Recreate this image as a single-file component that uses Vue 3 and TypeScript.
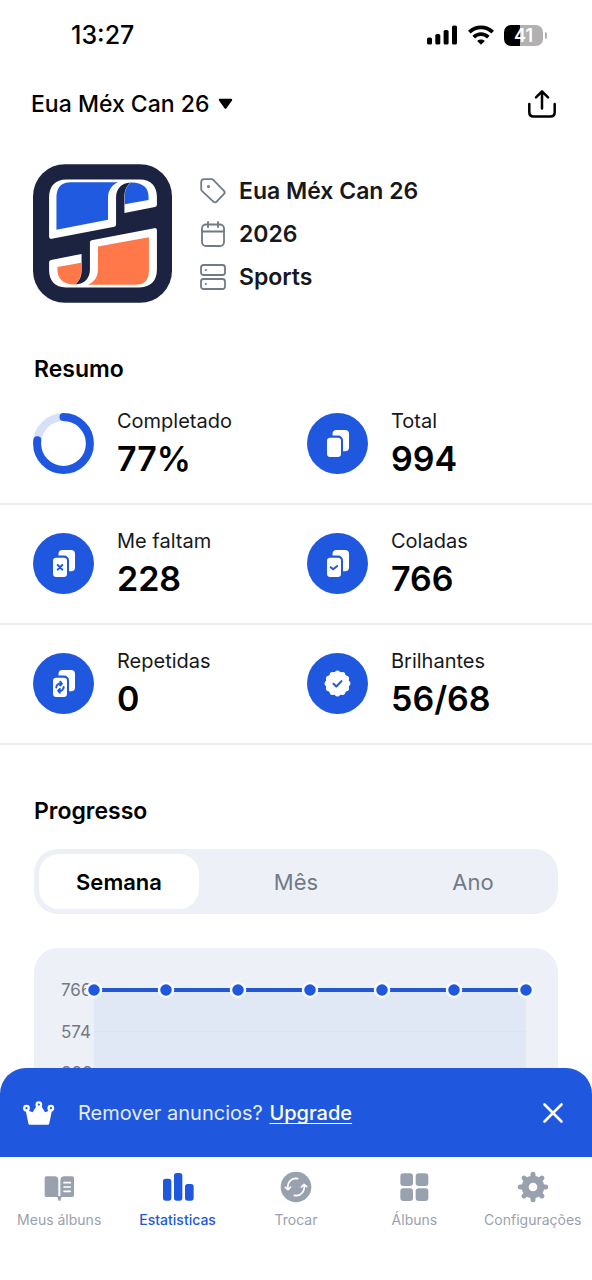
<script setup lang="ts">
import { computed, ref } from 'vue'

type StatIcon = 'ring' | 'cards' | 'missing' | 'pasted' | 'repeated' | 'badge'
interface Stat { label: string; value: string; icon: StatIcon }
interface Tab { id: string; label: string }

const album = 'Eua Méx Can 26'
const stats: Stat[] = [
  { label: 'Completado', value: '77%', icon: 'ring' },
  { label: 'Total', value: '994', icon: 'cards' },
  { label: 'Me faltam', value: '228', icon: 'missing' },
  { label: 'Coladas', value: '766', icon: 'pasted' },
  { label: 'Repetidas', value: '0', icon: 'repeated' },
  { label: 'Brilhantes', value: '56/68', icon: 'badge' },
]

const ranges = ['Semana', 'Mês', 'Ano']
const range = ref('Semana')

const tabs: Tab[] = [
  { id: 'book', label: 'Meus álbuns' },
  { id: 'bars', label: 'Estatisticas' },
  { id: 'swap', label: 'Trocar' },
  { id: 'grid', label: 'Álbuns' },
  { id: 'gear', label: 'Configurações' },
]
const activeTab = ref('bars')
const bannerOpen = ref(true)

// Chart geometry: seven daily samples, all at the top of the scale
const samples = [766, 766, 766, 766, 766, 766, 766]
const scale = [766, 574, 383, 191, 0]
const plot = { left: 60, right: 492, top: 42, bottom: 208 }
const points = computed(() =>
  samples.map((v, i) => ({
    x: plot.left + ((plot.right - plot.left) * i) / (samples.length - 1),
    y: plot.bottom - ((plot.bottom - plot.top) * v) / 766,
  })),
)
const line = computed(() => points.value.map((p) => `${p.x},${p.y}`).join(' '))
const area = computed(() => `${plot.left},${plot.bottom} ${line.value} ${plot.right},${plot.bottom}`)
const gridY = (v: number) => plot.bottom - ((plot.bottom - plot.top) * v) / 766

const around = (count: number, cx: number, cy: number, r: number) =>
  Array.from({ length: count }, (_, i) => {
    const a = (i * 2 * Math.PI) / count
    return { x: cx + r * Math.sin(a), y: cy - r * Math.cos(a) }
  })
const scallops = around(12, 30.5, 30.5, 10.2)
const teeth = around(8, 45, 45, 38)
</script>

<template>
  <div class="screen">
    <div class="status">
      <span class="clock">13:27</span>
      <div class="status-icons">
        <svg width="31" height="20" viewBox="0 0 31 20" aria-hidden="true">
          <rect x="0" y="12.500" width="5" height="7" rx="1.600" />
          <rect x="8.300" y="9" width="5" height="10.500" rx="1.600" />
          <rect x="16.600" y="5" width="5" height="14.500" rx="1.600" />
          <rect x="25" y="0.500" width="5" height="19" rx="1.600" />
        </svg>
        <svg width="26" height="20" viewBox="0 0 26 20" fill="none" stroke="#000" stroke-width="3.700" aria-hidden="true">
          <path d="M1.300 7.200C8 .8 18 .8 24.700 7.200" />
          <path d="M5.700 12.200c4.200-4 10.400-4 14.600 0" />
          <path d="M13 19.800l-3.800-3.900c2.200-1.900 5.400-1.900 7.600 0z" fill="#000" stroke="none" />
        </svg>
        <div class="battery"><span>41</span></div>
      </div>
    </div>

    <header class="topbar">
      <button class="picker" type="button">
        {{ album }}
        <svg width="15" height="12" viewBox="0 0 15 12" aria-hidden="true">
          <path d="M1.800 1.800h11.400L7.500 9.800z" stroke="#000" stroke-width="2" stroke-linejoin="round" />
        </svg>
      </button>
      <button class="share" type="button" aria-label="Compartilhar">
        <svg width="28" height="28" viewBox="0 0 28 28" fill="none" stroke="#000" stroke-width="2.500" stroke-linecap="round" stroke-linejoin="round" aria-hidden="true">
          <path d="M1.300 14v8.300q0 4.300 4.300 4.300h16.800q4.300 0 4.300-4.300V14M14 18.500V1.500M8 7.300l6-6 6 6" />
        </svg>
      </button>
    </header>

    <main class="content">
      <section class="album">
        <svg class="cover" viewBox="40 28 415 414" aria-hidden="true">
          <rect x="40" y="28" width="415" height="414" rx="96" fill="#1b2340" />
          <g>
            <path d="M88 128C88 94 106 74 140 74H360C392 74 410 94 410 126V149Q410 155 404 156L313 174V125C313 108 318 96 331 83C305 84 288 102 288 127V209Q288 214 283 215L96 251Q88 252 88 245Z" fill="#fff" />
            <path d="M110 224V124Q112 82 152 82H294C272 92 265 108 264 127V194Z" fill="#1f5ae0" />
            <path d="M331 83C318 97 314 108 314 125V148L385 135V126C385 98 366 82 331 83Z" fill="#1f5ae0" />
          </g>
          <g transform="rotate(180 249 235)">
            <path d="M88 128C88 94 106 74 140 74H360C392 74 410 94 410 126V149Q410 155 404 156L313 174V125C313 108 318 96 331 83C305 84 288 102 288 127V209Q288 214 283 215L96 251Q88 252 88 245Z" fill="#fff" />
            <path d="M112 224V124Q112 82 152 82H294C272 92 265 108 264 127V196Z" fill="#ff7849" />
            <path d="M331 83C318 97 314 108 314 125V148L385 135V126C385 98 366 82 331 83Z" fill="#ff7849" />
          </g>
        </svg>
        <ul class="facts">
          <li>
            <svg class="fact-icon" viewBox="0 0 26 26" aria-hidden="true">
              <path d="M1.200 4.200q0-3 3-3h7.100q1.300 0 2.200.9l10.300 10.500q1.800 1.800 0 3.600l-6.900 7.200q-1.900 1.900-3.800 0L2.100 13.200q-.9-.9-.9-2.200z" />
              <circle cx="8.500" cy="8.500" r="0.700" />
            </svg>
            {{ album }}
          </li>
          <li>
            <svg class="fact-icon" viewBox="0 0 26 26" aria-hidden="true">
              <rect x="2" y="3.500" width="22" height="21.500" rx="4" />
              <path d="M2 10.500h22M8 .8v5.400M18 .8v5.400" />
            </svg>
            2026
          </li>
          <li>
            <svg class="fact-icon" viewBox="0 0 26 26" aria-hidden="true">
              <rect x="1" y="1" width="24" height="10" rx="2.500" />
              <rect x="1" y="15" width="24" height="10" rx="2.500" />
              <path d="M5.700 6h.3M5.700 20h.3" />
            </svg>
            Sports
          </li>
        </ul>
      </section>

      <h2>Resumo</h2>
      <section class="stats">
        <div v-for="s in stats" :key="s.label" class="stat">
          <svg class="stat-icon" viewBox="0 0 61 61" aria-hidden="true">
            <template v-if="s.icon === 'ring'">
              <circle cx="30.500" cy="30.500" r="26.400" fill="none" stroke="#d6e1f9" stroke-width="8" />
              <circle cx="30.500" cy="30.500" r="26.400" fill="none" stroke="#1f58de" stroke-width="8" stroke-linecap="round" pathLength="100" stroke-dasharray="77 23" transform="rotate(-90 30.500 30.500)" />
            </template>
            <template v-else>
              <circle cx="30.500" cy="30.500" r="30.500" fill="#1f58de" />
              <g v-if="s.icon === 'badge'" fill="#fff">
                <circle cx="30.500" cy="30.500" r="11.800" />
                <circle v-for="(p, i) in scallops" :key="i" :cx="p.x" :cy="p.y" r="2.700" />
                <path d="M26.500 30.800l2.800 2.700 5.200-5.400" fill="none" stroke="#1f58de" stroke-width="2" stroke-linecap="round" stroke-linejoin="round" />
              </g>
              <g v-else>
                <rect x="25.500" y="17" width="16.500" height="21.200" rx="4" fill="#fff" />
                <rect x="17.800" y="22.600" width="18.200" height="23.400" rx="5" fill="#1f58de" />
                <rect x="20" y="24.700" width="14" height="19.300" rx="3.300" fill="#fff" />
                <g fill="none" stroke="#1f58de" stroke-width="2" stroke-linecap="round" stroke-linejoin="round">
                  <path v-if="s.icon === 'missing'" d="M24.700 32l4.600 4.600M29.300 32l-4.600 4.600" />
                  <path v-if="s.icon === 'pasted'" d="M23.700 34.200l2.500 2 4-3.200" />
                  <path v-if="s.icon === 'repeated'" d="M23.300 34.400a4 4 0 0 1 5.200-3.800M27.200 28.700l1.700 2-1.800 1.700M30.700 34a4 4 0 0 1-5.200 3.900M26.800 39.700l-1.700-2 1.800-1.700" />
                </g>
              </g>
            </template>
          </svg>
          <div class="stat-text">
            <span class="stat-label">{{ s.label }}</span>
            <strong>{{ s.value }}</strong>
          </div>
        </div>
      </section>

      <h2>Progresso</h2>
      <div class="segments" role="group" aria-label="Progresso">
        <button v-for="r in ranges" :key="r" type="button" :class="{ on: r === range }" :aria-pressed="r === range" @click="range = r">{{ r }}</button>
      </div>
      <div class="chart">
        <svg viewBox="0 0 524 240" role="img" aria-label="Progresso">
          <text v-for="v in scale" :key="v" x="27" :y="gridY(v) + 6">{{ v }}</text>
          <polygon :points="area" fill="#1f6ade" fill-opacity="0.060" />
          <line v-for="v in scale" :key="v" :x1="plot.left" :x2="plot.right" :y1="gridY(v)" :y2="gridY(v)" stroke="#dce2f0" />
          <polyline :points="line" fill="none" stroke="#2558d0" stroke-width="4" />
          <circle v-for="(p, i) in points" :key="i" :cx="p.x" :cy="p.y" r="7" fill="#1f58de" stroke="#f6faff" stroke-width="2.500" />
        </svg>
      </div>
    </main>

    <aside v-if="bannerOpen" class="banner">
      <svg class="crown" viewBox="69 117 94 74" aria-hidden="true">
        <path d="M76 144L85 187Q86 190 89 190H145Q148 190 149 187L158 144L136 152L124 132H110L98 152Z" fill="#fff" />
        <g fill="#1f58de" stroke="#fff" stroke-width="7">
          <circle cx="79" cy="139" r="7" /><circle cx="117" cy="128" r="7" /><circle cx="154" cy="139" r="7" />
        </g>
      </svg>
      <p>Remover anuncios? <a href="#upgrade">Upgrade</a></p>
      <button type="button" aria-label="Fechar" @click="bannerOpen = false">
        <svg width="20" height="20" viewBox="0 0 20 20" fill="none" stroke="#fff" stroke-width="2.600" stroke-linecap="round" aria-hidden="true">
          <path d="M1.500 1.500l17 17M18.500 1.500l-17 17" />
        </svg>
      </button>
    </aside>

    <nav class="tabs">
      <button v-for="t in tabs" :key="t.id" type="button" :class="{ active: t.id === activeTab }" @click="activeTab = t.id">
        <svg class="tab-icon" viewBox="0 0 90 90" fill="currentColor" aria-hidden="true">
          <template v-if="t.id === 'book'">
            <path d="M7 13H32Q43 13 43 26V75H7Q2 75 2 70V18Q2 13 7 13Z" />
            <path d="M85 13H62Q49 13 49 26V75H85Q90 75 90 70V18Q90 13 85 13Z" />
            <path d="M36 72H57Q50 75 50 86H43Q43 75 36 72Z" />
            <path d="M60 32H79M60 45H79M60 58H79" stroke="#fff" stroke-width="5" stroke-linecap="round" />
          </template>
          <template v-else-if="t.id === 'bars'">
            <rect x="0" y="20" width="25" height="66" rx="8" />
            <rect x="33" y="3" width="25" height="83" rx="8" />
            <rect x="66" y="36" width="26" height="50" rx="8" />
          </template>
          <template v-else-if="t.id === 'swap'">
            <circle cx="45" cy="45" r="46" />
            <g fill="none" stroke="#fff" stroke-width="5" stroke-linecap="round" stroke-linejoin="round">
              <path d="M21 52C17 31 32 16 50 20M13 46L21 53L29 45" />
              <path d="M69 38C73 59 58 74 40 70M61 45L69 37L77 44" />
            </g>
          </template>
          <template v-else-if="t.id === 'grid'">
            <rect x="4" y="4" width="38" height="38" rx="9" />
            <rect x="50" y="4" width="38" height="38" rx="9" />
            <rect x="4" y="49" width="38" height="38" rx="9" />
            <rect x="50" y="49" width="38" height="38" rx="9" />
          </template>
          <g v-else>
            <circle cx="45" cy="45" r="34" />
            <line v-for="(p, i) in teeth" :key="i" x1="45" y1="45" :x2="p.x" :y2="p.y" stroke="currentColor" stroke-width="15" stroke-linecap="round" />
            <circle cx="45" cy="45" r="13" fill="#fff" />
          </g>
        </svg>
        {{ t.label }}
      </button>
    </nav>
  </div>
</template>

<style>
body {
  margin: 0;
  background: #fff;
}
</style>

<style scoped>
.screen {
  display: flex;
  flex-direction: column;
  height: 100vh;
  overflow: hidden;
  background: #fff;
  color: #000;
  font-family: Inter, "Liberation Sans", sans-serif;
}
button {
  margin: 0;
  padding: 0;
  border: 0;
  background: none;
  color: inherit;
  font: inherit;
  cursor: pointer;
}
svg {
  display: block;
  flex: none;
  overflow: visible;
}
.status {
  display: flex;
  align-items: center;
  justify-content: space-between;
  flex: none;
  height: 70px;
  padding: 0 46px 0 71px;
}
.clock {
  font-size: 25px;
  font-weight: 500;
}
.status-icons {
  display: flex;
  align-items: center;
  gap: 10px;
}
.battery {
  position: relative;
  width: 39px;
  height: 21px;
  margin-right: 3px;
  border-radius: 7px;
  background: linear-gradient(90deg, #000 41%, #b1b1b1 41%);
  color: #fff;
  font-size: 18px;
  font-weight: 600;
  line-height: 21px;
  text-align: center;
}
.battery::after {
  content: "";
  position: absolute;
  top: 7px;
  right: -4px;
  width: 2px;
  height: 7px;
  border-radius: 0 2px 2px 0;
  background: #b1b1b1;
}
.topbar {
  display: flex;
  align-items: center;
  justify-content: space-between;
  flex: none;
  height: 68px;
  padding: 0 36px 0 31px;
}
.picker {
  display: flex;
  align-items: center;
  gap: 9px;
  font-size: 23px;
  font-weight: 500;
}
.content {
  flex: 1;
  min-height: 0;
  overflow-y: auto;
  scrollbar-width: none;
}
.album {
  display: flex;
  align-items: center;
  gap: 28px;
  padding: 26px 33px 0;
}
.cover {
  width: 139px;
  height: 139px;
}
.facts {
  display: grid;
  gap: 13px;
  margin: 0;
  padding: 0;
  list-style: none;
  color: #17181c;
  font-size: 23px;
  font-weight: 600;
  line-height: 30px;
}
.facts li {
  display: flex;
  align-items: center;
  gap: 13px;
}
.fact-icon {
  width: 26px;
  height: 26px;
  fill: none;
  stroke: #727987;
  stroke-width: 1.8;
  stroke-linecap: round;
  stroke-linejoin: round;
}
h2 {
  margin: 50px 34px 0;
  font-size: 23px;
  font-weight: 600;
  line-height: 32px;
}
.stats {
  display: grid;
  grid-template-columns: 1fr 1fr;
}
.stat {
  display: flex;
  align-items: center;
  gap: 23px;
  box-sizing: border-box;
  height: 120px;
  padding: 0 0 2px 33px;
  border-bottom: 2px solid #ebecee;
}
.stat:nth-child(even) {
  padding-left: 11px;
}
.stat-icon {
  width: 61px;
  height: 61px;
}
.stat-text {
  display: grid;
}
.stat-label {
  color: #17181c;
  font-size: 20px;
  line-height: 32px;
}
.stat strong {
  font-size: 34px;
  font-weight: 600;
  line-height: 44px;
}
.segments {
  display: grid;
  grid-template-columns: repeat(3, 1fr);
  gap: 17px;
  margin: 22px 34px 0;
  padding: 5px;
  border-radius: 24px;
  background: #edf1f7;
}
.segments button {
  height: 55px;
  border-radius: 20px;
  color: #737a87;
  font-size: 22px;
}
.segments .on {
  background: #fff;
  color: #000;
  font-weight: 600;
}
.chart {
  margin: 34px 34px 24px;
  border-radius: 24px;
  background: #edf1f7;
}
.chart svg {
  width: 100%;
}
.chart text {
  fill: #737984;
  font-size: 17px;
}
.banner {
  display: flex;
  align-items: center;
  flex: none;
  height: 89px;
  padding: 0 29px 0 23px;
  border-radius: 26px 26px 0 0;
  background: #1f58de;
}
.crown {
  width: 31px;
  height: 24px;
}
.banner p {
  flex: 1;
  margin: 0 0 0 24px;
  color: #e3edff;
  font-size: 20px;
}
.banner a {
  margin-left: 1px;
  color: #fff;
  font-weight: 500;
  text-decoration-thickness: 1px;
  text-decoration-skip-ink: none;
  text-underline-offset: 3px;
}
.tabs {
  display: grid;
  grid-template-columns: repeat(5, 1fr);
  flex: none;
  height: 123px;
  align-items: start;
}
.tabs button {
  display: grid;
  justify-items: center;
  gap: 9px;
  padding-top: 15px;
  color: #9aa1ae;
  font-size: 14px;
  line-height: 18px;
  white-space: nowrap;
}
.tabs .active {
  color: #1f58de;
  font-weight: 500;
}
.tab-icon {
  width: 30px;
  height: 30px;
}
</style>
